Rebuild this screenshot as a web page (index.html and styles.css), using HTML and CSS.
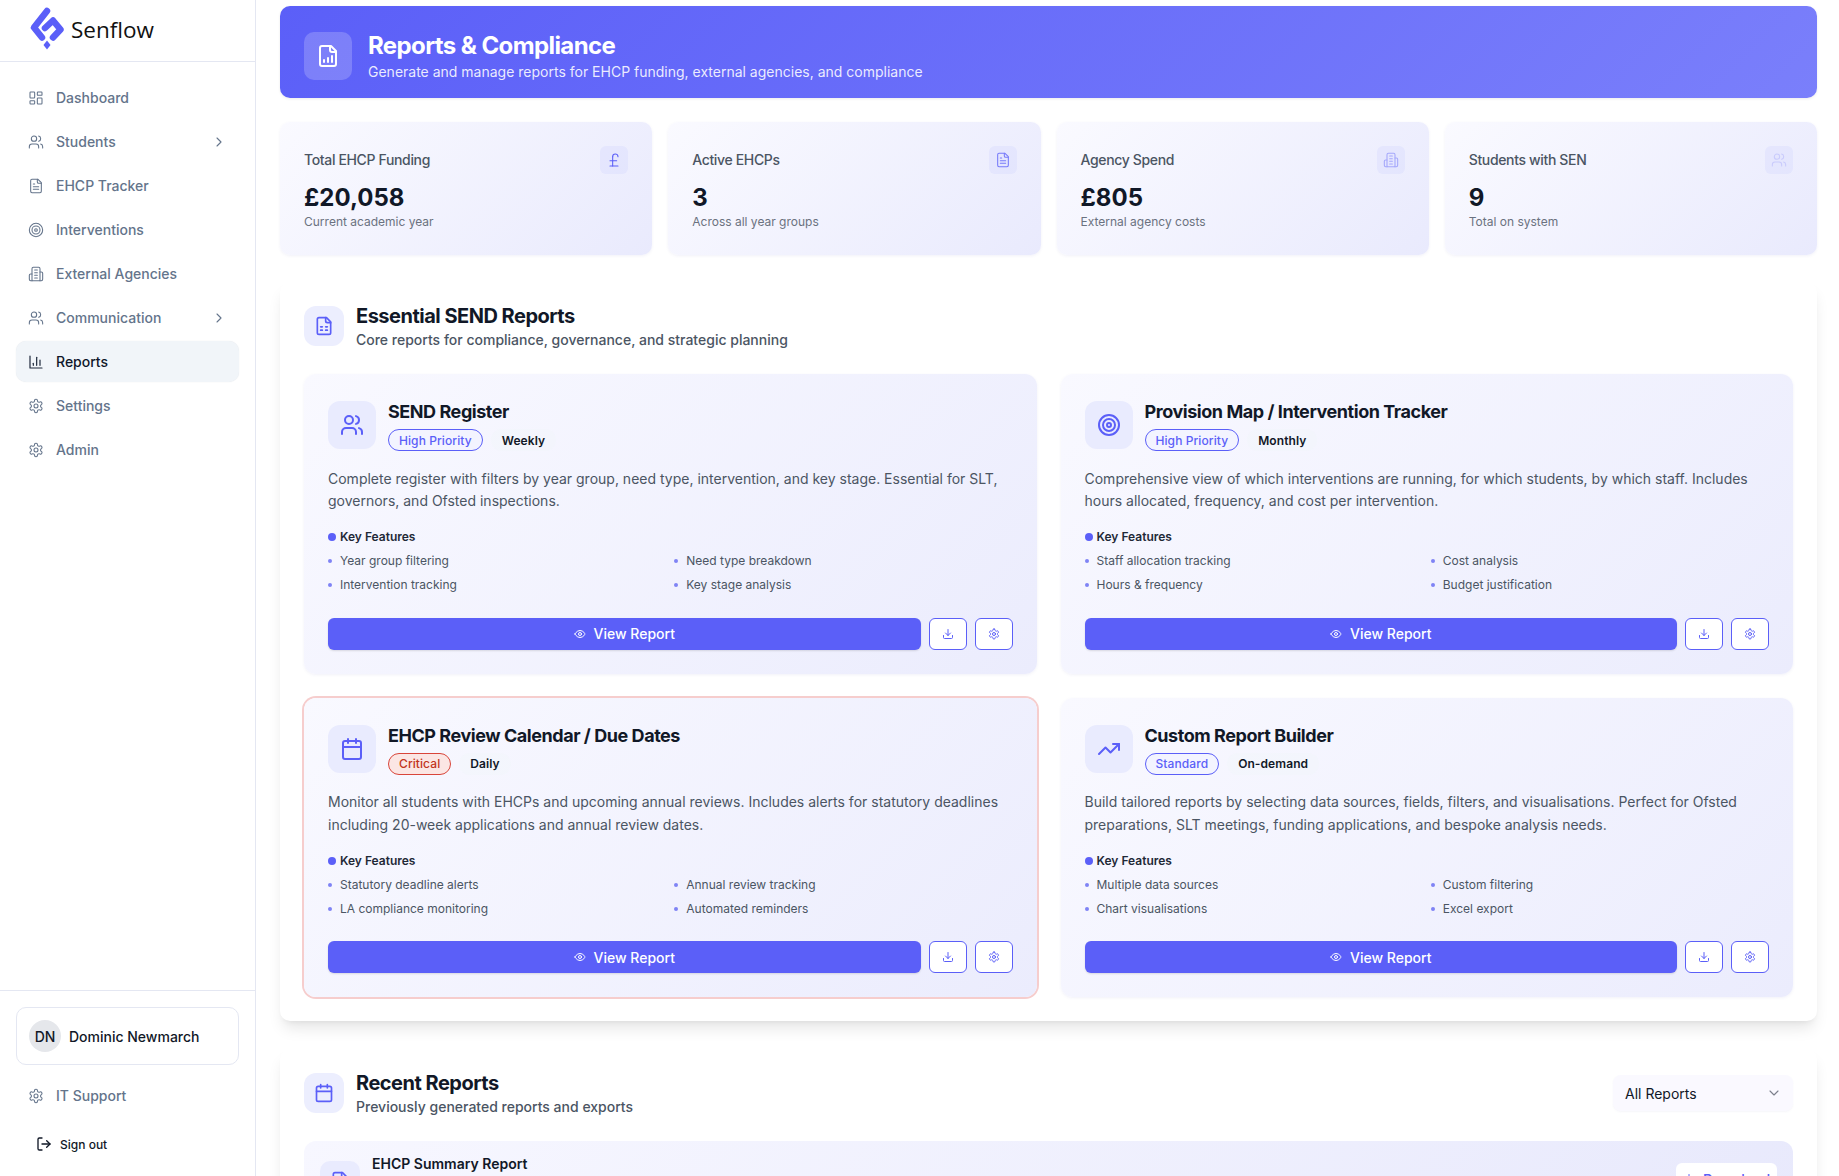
FILE: index.html
```html
<!DOCTYPE html>
<html lang="en">
<head>
<meta charset="utf-8">
<title>Reports &amp; Compliance - Senflow</title>
<link rel="stylesheet" href="styles.css">
</head>
<body>
<svg class="defs" width="0" height="0" aria-hidden="true">
  <symbol id="i-dash" viewBox="0 0 24 24"><rect x="3" y="3" width="7" height="9" rx="1"/><rect x="14" y="3" width="7" height="5" rx="1"/><rect x="14" y="12" width="7" height="9" rx="1"/><rect x="3" y="16" width="7" height="5" rx="1"/></symbol>
  <symbol id="i-users" viewBox="0 0 24 24"><path d="M16 21v-2a4 4 0 0 0-4-4H6a4 4 0 0 0-4 4v2"/><circle cx="9" cy="7" r="4"/><path d="M22 21v-2a4 4 0 0 0-3-3.87"/><path d="M16 3.13a4 4 0 0 1 0 7.75"/></symbol>
  <symbol id="i-file" viewBox="0 0 24 24"><path d="M15 2H6a2 2 0 0 0-2 2v16a2 2 0 0 0 2 2h12a2 2 0 0 0 2-2V7Z"/><path d="M14 2v4a2 2 0 0 0 2 2h4"/><path d="M10 9H8"/><path d="M16 13H8"/><path d="M16 17H8"/></symbol>
  <symbol id="i-target" viewBox="0 0 24 24"><circle cx="12" cy="12" r="10"/><circle cx="12" cy="12" r="6"/><circle cx="12" cy="12" r="2"/></symbol>
  <symbol id="i-building" viewBox="0 0 24 24"><path d="M6 22V4a2 2 0 0 1 2-2h8a2 2 0 0 1 2 2v18Z"/><path d="M6 12H4a2 2 0 0 0-2 2v6a2 2 0 0 0 2 2h2"/><path d="M18 9h2a2 2 0 0 1 2 2v9a2 2 0 0 1-2 2h-2"/><path d="M10 6h4"/><path d="M10 10h4"/><path d="M10 14h4"/><path d="M10 18h4"/></symbol>
  <symbol id="i-chart" viewBox="0 0 24 24"><path d="M3 3v18h18"/><path d="M18 17V9"/><path d="M13 17V5"/><path d="M8 17v-3"/></symbol>
  <symbol id="i-gear" viewBox="0 0 24 24"><path d="M12.22 2h-.44a2 2 0 0 0-2 2v.18a2 2 0 0 1-1 1.73l-.43.25a2 2 0 0 1-2 0l-.15-.08a2 2 0 0 0-2.73.73l-.22.38a2 2 0 0 0 .73 2.73l.15.1a2 2 0 0 1 1 1.72v.51a2 2 0 0 1-1 1.74l-.15.09a2 2 0 0 0-.73 2.73l.22.38a2 2 0 0 0 2.73.73l.15-.08a2 2 0 0 1 2 0l.43.25a2 2 0 0 1 1 1.73V20a2 2 0 0 0 2 2h.44a2 2 0 0 0 2-2v-.18a2 2 0 0 1 1-1.73l.43-.25a2 2 0 0 1 2 0l.15.08a2 2 0 0 0 2.73-.73l.22-.39a2 2 0 0 0-.73-2.73l-.15-.08a2 2 0 0 1-1-1.74v-.5a2 2 0 0 1 1-1.74l.15-.09a2 2 0 0 0 .73-2.73l-.22-.38a2 2 0 0 0-2.73-.73l-.15.08a2 2 0 0 1-2 0l-.43-.25a2 2 0 0 1-1-1.73V4a2 2 0 0 0-2-2z"/><circle cx="12" cy="12" r="3"/></symbol>
  <symbol id="i-right" viewBox="0 0 24 24"><path d="m9 18 6-6-6-6"/></symbol>
  <symbol id="i-down" viewBox="0 0 24 24"><path d="m6 9 6 6 6-6"/></symbol>
  <symbol id="i-logout" viewBox="0 0 24 24"><path d="M9 21H5a2 2 0 0 1-2-2V5a2 2 0 0 1 2-2h4"/><path d="m16 17 5-5-5-5"/><path d="M21 12H9"/></symbol>
  <symbol id="i-filechart" viewBox="0 0 24 24"><path d="M15 2H6a2 2 0 0 0-2 2v16a2 2 0 0 0 2 2h12a2 2 0 0 0 2-2V7Z"/><path d="M14 2v4a2 2 0 0 0 2 2h4"/><path d="M8 18v-2"/><path d="M12 18v-4"/><path d="M16 18v-6"/></symbol>
  <symbol id="i-filegrid" viewBox="0 0 24 24"><path d="M15 2H6a2 2 0 0 0-2 2v16a2 2 0 0 0 2 2h12a2 2 0 0 0 2-2V7Z"/><path d="M14 2v4a2 2 0 0 0 2 2h4"/><path d="M8 13h2"/><path d="M14 13h2"/><path d="M8 17h2"/><path d="M14 17h2"/></symbol>
  <symbol id="i-cal" viewBox="0 0 24 24"><path d="M8 2v4"/><path d="M16 2v4"/><rect x="3" y="4" width="18" height="18" rx="2"/><path d="M3 10h18"/></symbol>
  <symbol id="i-trend" viewBox="0 0 24 24"><path d="M22 7 13.500 15.500 8.500 10.500 2 17"/><path d="M16 7h6v6"/></symbol>
  <symbol id="i-dl" viewBox="0 0 24 24"><path d="M21 15v4a2 2 0 0 1-2 2H5a2 2 0 0 1-2-2v-4"/><path d="m7 10 5 5 5-5"/><path d="M12 15V3"/></symbol>
  <symbol id="i-eye" viewBox="0 0 24 24"><path d="M2 12s3-7 10-7 10 7 10 7-3 7-10 7-10-7-10-7Z"/><circle cx="12" cy="12" r="3"/></symbol>
  <symbol id="i-pound" viewBox="0 0 24 24"><path d="M18 7c0-5.333-8-5.333-8 0"/><path d="M10 7v14"/><path d="M6 21h12"/><path d="M6 13h10"/></symbol>
</svg>

<div class="app">
  <aside class="sidebar">
    <div class="brand">
      <svg class="logo" viewBox="0 0 34 44" aria-hidden="true">
        <path class="logo-stroke" d="M17 3 L4 19.500 L12 29.500"/>
        <path class="logo-stroke" d="M15 20 L23 12.500 L30.500 21.500 L23 29.500"/>
        <path class="logo-drop" d="M17 32.500 L20.500 37 L17 41.500 L13.500 37 Z"/>
      </svg>
      <span class="brand-name">Senflow</span>
    </div>
    <nav class="nav">
      <a class="nav-item"><svg class="ic"><use href="#i-dash"/></svg><span>Dashboard</span></a>
      <a class="nav-item"><svg class="ic"><use href="#i-users"/></svg><span>Students</span><svg class="ic chev"><use href="#i-right"/></svg></a>
      <a class="nav-item"><svg class="ic"><use href="#i-file"/></svg><span>EHCP Tracker</span></a>
      <a class="nav-item"><svg class="ic"><use href="#i-target"/></svg><span>Interventions</span></a>
      <a class="nav-item"><svg class="ic"><use href="#i-building"/></svg><span>External Agencies</span></a>
      <a class="nav-item"><svg class="ic"><use href="#i-users"/></svg><span>Communication</span><svg class="ic chev"><use href="#i-right"/></svg></a>
      <a class="nav-item active"><svg class="ic"><use href="#i-chart"/></svg><span>Reports</span></a>
      <a class="nav-item"><svg class="ic"><use href="#i-gear"/></svg><span>Settings</span></a>
      <a class="nav-item"><svg class="ic"><use href="#i-gear"/></svg><span>Admin</span></a>
    </nav>
    <div class="side-foot">
      <div class="user"><span class="avatar">DN</span><span class="user-name">Dominic Newmarch</span></div>
      <a class="nav-item"><svg class="ic"><use href="#i-gear"/></svg><span>IT Support</span></a>
      <a class="signout"><svg class="ic"><use href="#i-logout"/></svg><span>Sign out</span></a>
    </div>
  </aside>

  <main class="main">
    <header class="hero">
      <div class="hero-icon"><svg class="ic ic-24"><use href="#i-filechart"/></svg></div>
      <div>
        <h1>Reports &amp; Compliance</h1>
        <p>Generate and manage reports for EHCP funding, external agencies, and compliance</p>
      </div>
    </header>

    <section class="stats">
      <div class="stat">
        <div class="stat-top"><span class="stat-label">Total EHCP Funding</span><span class="stat-icon"><svg class="ic"><use href="#i-pound"/></svg></span></div>
        <div class="stat-value">£20,058</div><div class="stat-sub">Current academic year</div>
      </div>
      <div class="stat">
        <div class="stat-top"><span class="stat-label">Active EHCPs</span><span class="stat-icon fade-1"><svg class="ic"><use href="#i-file"/></svg></span></div>
        <div class="stat-value">3</div><div class="stat-sub">Across all year groups</div>
      </div>
      <div class="stat">
        <div class="stat-top"><span class="stat-label">Agency Spend</span><span class="stat-icon fade-2"><svg class="ic"><use href="#i-building"/></svg></span></div>
        <div class="stat-value">£805</div><div class="stat-sub">External agency costs</div>
      </div>
      <div class="stat">
        <div class="stat-top"><span class="stat-label">Students with SEN</span><span class="stat-icon fade-3"><svg class="ic"><use href="#i-users"/></svg></span></div>
        <div class="stat-value">9</div><div class="stat-sub">Total on system</div>
      </div>
    </section>

    <section class="panel">
      <div class="panel-head">
        <span class="panel-icon"><svg class="ic ic-20"><use href="#i-filegrid"/></svg></span>
        <div><h2>Essential SEND Reports</h2><p>Core reports for compliance, governance, and strategic planning</p></div>
      </div>
      <div class="report-grid">
        <article class="report">
          <div class="report-head">
            <span class="report-icon"><svg class="ic ic-24"><use href="#i-users"/></svg></span>
            <div><h3>SEND Register</h3><div class="badges"><span class="badge badge-blue">High Priority</span><span class="badge badge-plain">Weekly</span></div></div>
          </div>
          <p class="desc">Complete register with filters by year group, need type, intervention, and key stage. Essential for SLT, governors, and Ofsted inspections.</p>
          <div class="kf-title">Key Features</div>
          <ul class="kf"><li>Year group filtering</li><li>Need type breakdown</li><li>Intervention tracking</li><li>Key stage analysis</li></ul>
          <div class="actions"><button class="btn-view"><svg class="ic ic-12"><use href="#i-eye"/></svg>View Report</button><button class="btn-icon"><svg class="ic ic-12"><use href="#i-dl"/></svg></button><button class="btn-icon"><svg class="ic ic-12"><use href="#i-gear"/></svg></button></div>
        </article>
        <article class="report">
          <div class="report-head">
            <span class="report-icon"><svg class="ic ic-24"><use href="#i-target"/></svg></span>
            <div><h3>Provision Map / Intervention Tracker</h3><div class="badges"><span class="badge badge-blue">High Priority</span><span class="badge badge-plain">Monthly</span></div></div>
          </div>
          <p class="desc">Comprehensive view of which interventions are running, for which students, by which staff. Includes hours allocated, frequency, and cost per intervention.</p>
          <div class="kf-title">Key Features</div>
          <ul class="kf"><li>Staff allocation tracking</li><li>Cost analysis</li><li>Hours &amp; frequency</li><li>Budget justification</li></ul>
          <div class="actions"><button class="btn-view"><svg class="ic ic-12"><use href="#i-eye"/></svg>View Report</button><button class="btn-icon"><svg class="ic ic-12"><use href="#i-dl"/></svg></button><button class="btn-icon"><svg class="ic ic-12"><use href="#i-gear"/></svg></button></div>
        </article>
        <article class="report report-critical">
          <div class="report-head">
            <span class="report-icon"><svg class="ic ic-24"><use href="#i-cal"/></svg></span>
            <div><h3>EHCP Review Calendar / Due Dates</h3><div class="badges"><span class="badge badge-red">Critical</span><span class="badge badge-plain">Daily</span></div></div>
          </div>
          <p class="desc">Monitor all students with EHCPs and upcoming annual reviews. Includes alerts for statutory deadlines including 20-week applications and annual review dates.</p>
          <div class="kf-title">Key Features</div>
          <ul class="kf"><li>Statutory deadline alerts</li><li>Annual review tracking</li><li>LA compliance monitoring</li><li>Automated reminders</li></ul>
          <div class="actions"><button class="btn-view"><svg class="ic ic-12"><use href="#i-eye"/></svg>View Report</button><button class="btn-icon"><svg class="ic ic-12"><use href="#i-dl"/></svg></button><button class="btn-icon"><svg class="ic ic-12"><use href="#i-gear"/></svg></button></div>
        </article>
        <article class="report">
          <div class="report-head">
            <span class="report-icon"><svg class="ic ic-24"><use href="#i-trend"/></svg></span>
            <div><h3>Custom Report Builder</h3><div class="badges"><span class="badge badge-blue">Standard</span><span class="badge badge-plain">On-demand</span></div></div>
          </div>
          <p class="desc">Build tailored reports by selecting data sources, fields, filters, and visualisations. Perfect for Ofsted preparations, SLT meetings, funding applications, and bespoke analysis needs.</p>
          <div class="kf-title">Key Features</div>
          <ul class="kf"><li>Multiple data sources</li><li>Custom filtering</li><li>Chart visualisations</li><li>Excel export</li></ul>
          <div class="actions"><button class="btn-view"><svg class="ic ic-12"><use href="#i-eye"/></svg>View Report</button><button class="btn-icon"><svg class="ic ic-12"><use href="#i-dl"/></svg></button><button class="btn-icon"><svg class="ic ic-12"><use href="#i-gear"/></svg></button></div>
        </article>
      </div>
    </section>

    <section class="panel">
      <div class="panel-head">
        <span class="panel-icon"><svg class="ic ic-20"><use href="#i-cal"/></svg></span>
        <div class="grow"><h2>Recent Reports</h2><p>Previously generated reports and exports</p></div>
        <div class="select"><span>All Reports</span><svg class="ic"><use href="#i-down"/></svg></div>
      </div>
      <div class="recent">
        <span class="recent-icon"><svg class="ic ic-20"><use href="#i-file"/></svg></span>
        <div class="grow"><div class="recent-title">EHCP Summary Report</div></div>
        <button class="btn-dl"><svg class="ic ic-12"><use href="#i-dl"/></svg>Download</button>
      </div>
    </section>
  </main>
</div>
</body>
</html>
```
FILE: styles.css
```css
* { box-sizing: border-box; }
html, body { margin: 0; height: 1176px; overflow: hidden; }
body { font-family: Inter, "Liberation Sans", sans-serif; background: #fff; color: #111827; }
h1, h2, h3, p, ul { margin: 0; padding: 0; }
button { font-family: inherit; cursor: pointer; }
.defs { position: absolute; }
.ic { width: 16px; height: 16px; flex: none; fill: none; stroke: currentColor; stroke-width: 2; stroke-linecap: round; stroke-linejoin: round; }
.ic-12 { width: 12px; height: 12px; }
.ic-20 { width: 20px; height: 20px; }
.ic-24 { width: 24px; height: 24px; }
.grow { flex: 1; min-width: 0; }

.app { display: flex; height: 1176px; }

.sidebar { width: 256px; flex: none; display: flex; flex-direction: column; border-right: 1px solid #e4e7f2; background: #fff; }
.brand { height: 62px; flex: none; display: flex; align-items: center; gap: 7px; padding-left: 30px; padding-bottom: 1px; border-bottom: 1px solid #e4e7f2; }
.logo { width: 34px; height: 44px; overflow: visible; }
.logo-stroke { fill: none; stroke: #5b5ff8; stroke-width: 6.500; stroke-linecap: round; stroke-linejoin: round; }
.logo-drop { fill: #5b5ff8; }
.brand-name { font-family: "Open Sans", sans-serif; font-size: 22.500px; font-weight: 500; color: #111; line-height: 30px; }
.nav { flex: 1; display: flex; flex-direction: column; gap: 3px; padding: 15px 16px 16px; }
.nav-item { height: 41px; flex: none; display: flex; align-items: center; gap: 12px; padding: 0 12px; border-radius: 10px; font-size: 14px; font-weight: 500; color: #64748b; }
.nav-item span { flex: 1; }
.nav-item .ic { stroke-width: 1.6; }
.nav-item.active { background: #f1f5f9; color: #0f172a; box-shadow: 0 0 1px rgba(100,116,139,.2); }
.nav-item.active .ic { color: #1e293b; stroke-width: 1.8; }
.side-foot { border-top: 1px solid #e4e7f2; padding: 16px 16px 18px; display: flex; flex-direction: column; }
.user { height: 58px; display: flex; align-items: center; gap: 8px; padding: 0 12px; border: 1px solid #e4e7f2; border-radius: 10px; margin-bottom: 10px; }
.avatar { width: 32px; height: 32px; border-radius: 50%; background: #e5e7eb; display: flex; align-items: center; justify-content: center; font-size: 14px; font-weight: 500; color: #111827; }
.user-name { font-size: 14px; font-weight: 500; color: #111827; }
.signout { display: flex; align-items: center; gap: 8px; padding: 0 20px; height: 28px; margin-top: 14px; font-size: 12px; font-weight: 500; color: #111827; }

.main { flex: 1; min-width: 0; padding: 6px 22px 0 24px; overflow: hidden; }
.hero { height: 92px; display: flex; align-items: center; gap: 16px; padding: 8px 24px 0; border-radius: 10px; color: #fff; background: linear-gradient(135deg, #5b5ff8, #7a7ffb); box-shadow: 0 1px 3px rgba(0,0,0,.08); }
.hero-icon { width: 48px; height: 48px; border-radius: 10px; background: rgba(255,255,255,.2); display: flex; align-items: center; justify-content: center; }
.hero h1 { font-size: 24px; line-height: 32px; font-weight: 700; letter-spacing: -.6px; }
.hero p { font-size: 14px; line-height: 20px; color: rgba(255,255,255,.88); }

.stats { display: grid; grid-template-columns: repeat(4, 1fr); gap: 16px; margin-top: 24px; }
.stat { height: 133px; padding: 24px; border-radius: 10px; background: linear-gradient(135deg, #fafaff, #e9eafd); box-shadow: 0 1px 3px rgba(80,80,160,.08); }
.stat-top { display: flex; align-items: center; justify-content: space-between; height: 28px; }
.stat-label { font-size: 14px; line-height: 27px; height: 28px; font-weight: 500; color: #4b5563; letter-spacing: -.35px; }
.stat-icon { width: 28px; height: 28px; border-radius: 6px; background: rgba(91,95,248,.06); color: #5b5ff8; display: flex; align-items: center; justify-content: center; }
.stat-icon .ic { stroke-width: 1.6; }
.fade-1 { color: #777bfa; }
.fade-2 { color: #a5a8fb; }
.fade-3 { color: #c9cbfc; }
.stat-value { font-size: 24px; font-weight: 700; line-height: 32px; margin-top: 8px; }
.stat-sub { font-size: 12px; line-height: 16px; color: #6b7280; }

.panel { margin-top: 27px; padding: 20px 24px 24px; background: #fff; border-radius: 10px; box-shadow: 0 10px 15px -3px rgba(0,0,0,.1), 0 4px 6px -4px rgba(0,0,0,.08); }
.panel + .panel { margin-top: 28px; }
.panel-head { display: flex; align-items: center; gap: 12px; margin-bottom: 24px; height: 48px; }
.panel-icon { width: 40px; height: 40px; border-radius: 12px; background: #eceefe; color: #5b5ff8; display: flex; align-items: center; justify-content: center; }
.panel-head h2 { font-size: 20px; line-height: 28px; font-weight: 700; letter-spacing: -.5px; color: #111827; }
.panel-head p { font-size: 14px; line-height: 20px; font-weight: 500; color: #4b5563; }
.report-grid { display: grid; grid-template-columns: 1fr 1fr; gap: 24px; }
.report { height: 299.500px; padding: 27px 24px 24px; border-radius: 12px; background: linear-gradient(135deg, #f9f9ff, #ebecfd); box-shadow: 0 1px 3px rgba(80,80,160,.08); display: flex; flex-direction: column; }
.report-critical { box-shadow: 0 0 0 2px #f6cdcd; }
.report-head { display: flex; gap: 12px; align-items: flex-start; }
.report-icon { width: 48px; height: 48px; border-radius: 12px; background: #e9ebfe; color: #5b5ff8; display: flex; align-items: center; justify-content: center; flex: none; }
.report h3 { font-size: 18px; line-height: 22px; font-weight: 700; letter-spacing: -.45px; color: #111827; }
.badges { display: flex; gap: 8px; margin-top: 6px; }
.badge { height: 22px; display: inline-flex; align-items: center; padding: 0 10px; border: 1px solid transparent; border-radius: 999px; font-size: 12px; font-weight: 500; letter-spacing: .08px; }
.badge-blue { color: #5b5ff8; border-color: #5b5ff8; background: #f3f4ff; }
.badge-red { color: #c2341c; border-color: #d9453a; background: #fbe6e4; }
.badge-plain { color: #111827; background: rgba(241,245,249,.35); font-weight: 600; }
.desc { font-size: 14px; line-height: 22.750px; color: #4b5563; margin-top: 16.500px; }
.kf-title { position: relative; font-size: 12px; line-height: 16px; font-weight: 600; color: #1f2937; margin-top: 16px; padding-left: 12px; }
.kf-title::before { content: ""; position: absolute; left: 0; top: 4px; width: 8px; height: 8px; border-radius: 50%; background: #5b5ff8; }
.kf { list-style: none; display: grid; grid-template-columns: 1fr 1fr; gap: 8px; margin-top: 8px; }
.kf li { position: relative; font-size: 12px; line-height: 16px; color: #4b5563; padding-left: 12px; }
.kf li::before { content: ""; position: absolute; left: 0; top: 6px; width: 4px; height: 4px; border-radius: 50%; background: #7f83f5; }
.actions { display: flex; gap: 8px; margin-top: auto; }
.btn-view { flex: 1; height: 32px; display: flex; align-items: center; justify-content: center; gap: 8px; border: 0; border-radius: 6px; background: #5b5ff8; color: #fff; font-size: 14px; font-weight: 500; box-shadow: 0 1px 2px rgba(0,0,0,.12); }
.btn-icon { width: 38px; height: 32px; display: flex; align-items: center; justify-content: center; padding: 0; border: 1px solid #5b5ff8; border-radius: 6px; background: #fff; color: #5b5ff8; }

.select { width: 180px; height: 36px; display: flex; align-items: center; justify-content: space-between; padding: 0 11px 0 12px; border-radius: 8px; background: #faf9ff; font-size: 14px; color: #111827; box-shadow: 0 1px 2px rgba(80,80,160,.05); }
.select .ic { color: #7c808c; stroke-width: 1.7; }
.recent { height: 84px; display: flex; gap: 12px; padding: 20px 16px; border-radius: 12px; background: linear-gradient(135deg, #f7f7ff, #e8e9fc); }
.recent-icon { width: 40px; height: 40px; border-radius: 10px; background: #e9ebfe; color: #5b5ff8; display: flex; align-items: center; justify-content: center; }
.recent-title { font-size: 14px; line-height: 20px; font-weight: 600; color: #111827; margin-top: -7px; }
.btn-dl { width: 101px; height: 32px; margin-top: 2px; display: flex; align-items: center; justify-content: center; gap: 8px; border: 0; border-radius: 6px; background: #fff; color: #5b5ff8; font-size: 14px; font-weight: 500; }
```
